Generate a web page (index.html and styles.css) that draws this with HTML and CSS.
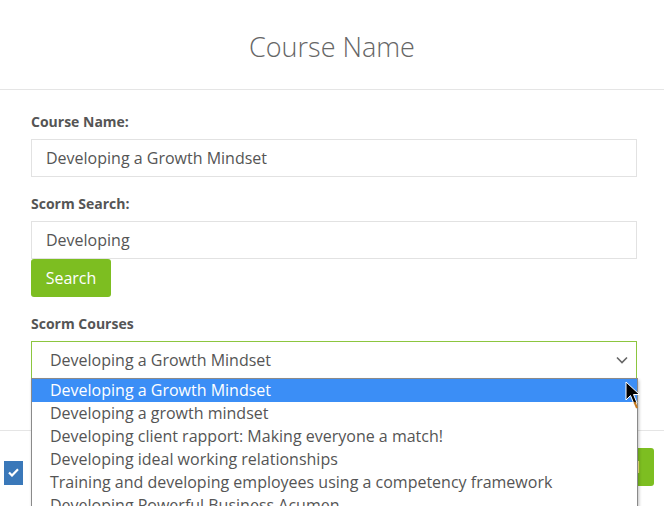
FILE: index.html
```html
<!DOCTYPE html>
<html lang="en">
<head>
  <meta charset="UTF-8">
  <meta name="viewport" content="width=device-width, initial-scale=1.0">
  <title>Course Name</title>
  <link rel="stylesheet" href="styles.css">
</head>
<body>
  <div class="modal">
    <div class="modal-header">
      <h2>Course Name</h2>
    </div>

    <div class="modal-body">
      <label for="courseName">Course Name:</label>
      <input type="text" id="courseName" value="Developing a Growth Mindset">

      <label for="scormSearch" class="spaced">Scorm Search:</label>
      <input type="text" id="scormSearch" value="Developing">
      <button type="button" class="btn-green">Search</button>

      <label for="scormCourses" class="spaced">Scorm Courses</label>
      <div class="select-wrap">
        <div class="select" id="scormCourses">
          <span>Developing a Growth Mindset</span>
          <svg class="chevron" width="12" height="8" viewBox="0 0 12 8">
            <path d="M1 1.5 L6 6.5 L11 1.5" fill="none" stroke="#666" stroke-width="1.6"/>
          </svg>
        </div>

        <ul class="dropdown">
          <li class="selected">Developing a Growth Mindset</li>
          <li>Developing a growth mindset</li>
          <li>Developing client rapport: Making everyone a match!</li>
          <li>Developing ideal working relationships</li>
          <li>Training and developing employees using a competency framework</li>
          <li>Developing Powerful Business Acumen</li>
        </ul>

        <svg class="cursor" width="18" height="28" viewBox="0 0 18 28">
          <path d="M1 1 L1 19 L5.5 14.5 L9 23 L12 21.8 L8.5 13.5 L14.5 13.5 Z" fill="#000" stroke="#fff" stroke-width="1"/>
          <path d="M9.5 21 L12 27" stroke="#c77a1e" stroke-width="2"/>
        </svg>
      </div>
    </div>

    <div class="modal-footer">
      <span class="check">
        <svg width="11" height="9" viewBox="0 0 11 9">
          <path d="M1 4.5 L4 7.5 L10 1.2" fill="none" stroke="#fff" stroke-width="2.2"/>
        </svg>
      </span>
      <button type="button" class="btn-green btn-save">Add</button>
    </div>
  </div>
</body>
</html>
```

FILE: styles.css
```css
body {
  margin: 0;
  font-family: "Open Sans", Arial, sans-serif;
  background-color: #fff;
  color: #555;
}

.modal {
  width: 664px;
  height: 506px;
  overflow: hidden;
}

.modal-header {
  height: 89px;
  border-bottom: 1px solid #e5e5e5;
  display: flex;
  align-items: center;
  justify-content: center;
}

.modal-header h2 {
  margin: 4px 0 0 0;
  font-size: 27px;
  font-weight: 300;
  color: #666;
}

.modal-body {
  padding: 22px 27px 51px 31px;
}

label {
  display: block;
  font-size: 14px;
  font-weight: 700;
  line-height: 20px;
  margin-bottom: 7px;
  color: #555;
}

label.spaced {
  margin-top: 17px;
}

input[type="text"] {
  display: block;
  width: 100%;
  height: 38px;
  padding: 0 14px;
  border: 1px solid #e2e2e2;
  font-family: inherit;
  font-size: 16px;
  color: #555;
  box-sizing: border-box;
  outline: none;
}

.btn-green {
  background-color: #7dbe21;
  color: #fff;
  border: none;
  border-radius: 3px;
  font-family: inherit;
  font-size: 16px;
  cursor: pointer;
}

.modal-body .btn-green {
  display: block;
  height: 38px;
  width: 80px;
  padding: 0;
}

.select-wrap {
  position: relative;
}

.select {
  height: 38px;
  border: 1px solid #8cc63f;
  box-sizing: border-box;
  display: flex;
  align-items: center;
  justify-content: space-between;
  padding: 0 8px 0 18px;
  font-size: 16px;
  color: #555;
}

.chevron {
  display: block;
}

.dropdown {
  position: absolute;
  left: 0;
  top: 37px;
  width: 605px;
  margin: 0;
  padding: 0;
  list-style: none;
  background: #fff;
  border: 1px solid #8a8a8a;
  box-shadow: 1px 2px 3px rgba(0, 0, 0, 0.25);
  z-index: 5;
}

.dropdown li {
  height: 23px;
  line-height: 23px;
  padding-left: 18px;
  font-size: 16px;
  color: #555;
  white-space: nowrap;
}

.dropdown li.selected {
  background-color: #3b8ef6;
  color: #fff;
}

.cursor {
  position: absolute;
  left: 594px;
  top: 40px;
  z-index: 6;
}

.modal-footer {
  border-top: 1px solid #e5e5e5;
  display: flex;
  align-items: center;
  justify-content: space-between;
  padding: 17px 10px 0 4px;
}

.check {
  width: 19px;
  height: 24px;
  background-color: #3a78b9;
  display: flex;
  align-items: center;
  justify-content: center;
  margin-top: 11px;
}

.btn-save {
  height: 38px;
  padding: 0 14px;
}
```
